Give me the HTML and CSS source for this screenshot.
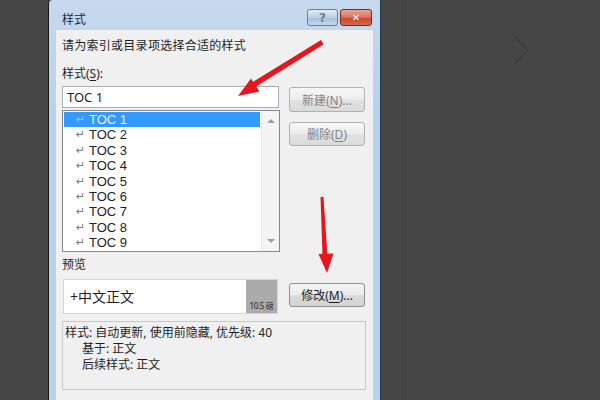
FILE: index.html
```html
<!DOCTYPE html>
<html lang="zh-CN">
<head>
    <meta charset="UTF-8">
    <title>样式</title>
    <link rel="stylesheet" href="styles.css">
</head>
<body>
    <div class="stage">
        <div class="window">
            <div class="titlebar">
                <span class="title">样式</span>
                <div class="caption-btns">
                    <span class="cap-btn help">?</span>
                    <span class="cap-btn close">✕</span>
                </div>
            </div>
            <div class="client">
                <div class="hint">请为索引或目录项选择合适的样式</div>
                <div class="label">样式(<u>S</u>):</div>
                <div class="main">
                    <div class="left-col">
                        <div class="input">TOC 1</div>
                        <div class="list">
                            <div class="items">
                                <div class="item selected"><span class="ret">↵</span>TOC 1</div>
                                <div class="item"><span class="ret">↵</span>TOC 2</div>
                                <div class="item"><span class="ret">↵</span>TOC 3</div>
                                <div class="item"><span class="ret">↵</span>TOC 4</div>
                                <div class="item"><span class="ret">↵</span>TOC 5</div>
                                <div class="item"><span class="ret">↵</span>TOC 6</div>
                                <div class="item"><span class="ret">↵</span>TOC 7</div>
                                <div class="item"><span class="ret">↵</span>TOC 8</div>
                                <div class="item"><span class="ret">↵</span>TOC 9</div>
                            </div>
                            <div class="scrollbar">
                                <span class="arrow up"></span>
                                <span class="arrow down"></span>
                            </div>
                        </div>
                        <div class="label preview-label">预览</div>
                        <div class="preview">
                            <span class="preview-text">+中文正文</span>
                            <span class="size-box">10.5 磅</span>
                        </div>
                    </div>
                    <div class="right-col">
                        <button class="btn disabled new">新建(<u>N</u>)...</button>
                        <button class="btn disabled delete">删除(<u>D</u>)</button>
                        <button class="btn modify">修改(<u>M</u>)...</button>
                    </div>
                </div>
                <div class="description">
                    <div>样式: 自动更新, 使用前隐藏, 优先级: 40</div>
                    <div class="indent">基于: 正文</div>
                    <div class="indent">后续样式: 正文</div>
                </div>
            </div>
        </div>
        <div class="backdrop-line"></div>
    </div>

    <!-- background chevron and the red annotation arrows -->
    <svg class="overlay" width="600" height="400" viewBox="0 0 600 400">
        <polyline points="514,35 528,50 514,65" fill="none" stroke="#3d3d3d" stroke-width="1.5"/>
        <polygon points="321,40 323.5,44.5 252,89 249.5,84" fill="#e5161c"/>
        <polygon points="238,96 251,78.5 259.5,91.5" fill="#e5161c"/>
        <polygon points="320.5,197 323.5,197 327.5,256 322.5,256" fill="#e5161c"/>
        <polygon points="327,273 318.5,254 333.5,253.5" fill="#e5161c"/>
    </svg>
</body>
</html>
```

FILE: styles.css
```css
body {
    margin: 0;
    background-color: #464646;
    font-family: "Noto Sans", "Noto Sans CJK SC", sans-serif;
    font-size: 12px;
    color: #1e1e1e;
    width: 600px;
    height: 400px;
    overflow: hidden;
}

.stage {
    display: flex;
    padding-left: 48px;
    height: 400px;
}

.window {
    width: 317px;
    height: 400px;
    border-left: 1px solid #151515;
    border-right: 1px solid #1d3a4c;
    border-top-left-radius: 4px;
    background: linear-gradient(to bottom, #c6d9ee, #b8d0ea 120px, #b9d1eb);
    padding: 0 7px;
    overflow: hidden;
}

.backdrop-line {
    width: 1px;
    height: 400px;
    margin-left: 21px;
    background-color: #414141;
}

.titlebar {
    height: 30px;
    display: flex;
    align-items: flex-start;
    justify-content: space-between;
}

.title {
    font-size: 12px;
    margin-top: 10px;
    margin-left: 6px;
    color: #1e2a38;
}

.caption-btns {
    display: flex;
    gap: 2px;
    margin-top: 9px;
    margin-right: 1px;
}

.cap-btn {
    height: 15px;
    border: 1px solid #6b7f95;
    border-radius: 3px;
    display: flex;
    align-items: center;
    justify-content: center;
    font-weight: bold;
    color: #fff;
}

.help {
    width: 29px;
    background: linear-gradient(to bottom, #e3ecf6, #bccfe5 50%, #a7bfdb 51%, #c4d6ea);
    color: #6d7f94;
    font-size: 12px;
    font-family: "DejaVu Sans", sans-serif;
}

.close {
    width: 30px;
    border-color: #7a2a20;
    background: linear-gradient(to bottom, #e9a797, #d8705d 50%, #c6462e 51%, #d66a4f);
    font-size: 10px;
    font-family: "DejaVu Sans", sans-serif;
}

.client {
    background-color: #f0f0f0;
    height: 370px;
    padding: 8px 8px 0 6px;
    box-sizing: border-box;
}

.hint {
    line-height: 16px;
    letter-spacing: 0.27px;
}

.label {
    line-height: 16px;
    margin-top: 12px;
}

u {
    text-decoration-thickness: 1px;
    text-underline-offset: 2px;
}

.main {
    display: flex;
    gap: 9px;
    margin-top: 4px;
}

.left-col {
    width: 218px;
}

.input {
    height: 20px;
    border: 1px solid #abadb3;
    background-color: #fff;
    font-size: 13px;
    line-height: 20px;
    padding-left: 4px;
    width: 211px;
}

.list {
    margin-top: 2px;
    height: 140px;
    border: 1px solid #828790;
    background-color: #fff;
    display: flex;
}

.items {
    flex: 1;
    padding: 1px 1px 0 1px;
}

.item {
    height: 15.4px;
    line-height: 15.4px;
    font-family: "Liberation Sans", sans-serif;
    font-size: 13px;
    color: #1e1e1e;
    padding-left: 25px;
    position: relative;
    overflow: hidden;
}

.item .ret {
    position: absolute;
    left: 12px;
    font-size: 11px;
    color: #7a7a7a;
    font-family: "DejaVu Sans", sans-serif;
}

.item.selected {
    background-color: #3399ff;
    color: #e6f3ff;
}

.item.selected .ret {
    color: #9cc8f5;
}

.scrollbar {
    width: 17px;
    background-color: #f4f4f4;
    border-left: 1px solid #e8e8e8;
    display: flex;
    flex-direction: column;
    justify-content: space-between;
    align-items: center;
    padding: 8px 0 8px;
}

.arrow {
    width: 0;
    height: 0;
    border-left: 4px solid transparent;
    border-right: 4px solid transparent;
}

.arrow.up {
    border-bottom: 4px solid #a0a0a0;
}

.arrow.down {
    border-top: 4px solid #a0a0a0;
}

.preview-label {
    margin-top: 5px;
}

.preview {
    margin-top: 6px;
    height: 33px;
    width: 213px;
    margin-left: 1px;
    border: 1px solid #d5d5d5;
    background-color: #fff;
    display: flex;
    justify-content: space-between;
}

.preview-text {
    font-size: 14px;
    line-height: 33px;
    padding-left: 6px;
}

.size-box {
    width: 31px;
    background-color: #ababab;
    font-size: 8px;
    display: flex;
    align-items: flex-end;
    justify-content: center;
    padding-bottom: 2px;
    box-sizing: border-box;
    color: #222;
    letter-spacing: -0.3px;
}

.right-col {
    width: 76px;
    display: flex;
    flex-direction: column;
}

.btn {
    font-family: "Noto Sans", "Noto Sans CJK SC", sans-serif;
    font-size: 12px;
    height: 25px;
    border: 1px solid #8e8f8f;
    border-radius: 3px;
    background: linear-gradient(to bottom, #f4f4f4, #ebebeb 50%, #dcdcdc 51%, #d2d2d2);
    color: #1e1e1e;
    padding: 0;
}

.btn.disabled {
    color: #838383;
    border-color: #adb2b5;
    background: linear-gradient(to bottom, #f6f6f6, #ececec 50%, #e2e2e2 51%, #dadada);
}

.btn.new {
    margin-top: 1px;
}

.btn.delete {
    margin-top: 10px;
    height: 24px;
}

.btn.modify {
    margin-top: 137px;
    height: 24px;
}

.description {
    margin-top: 7px;
    width: 298px;
    height: 61px;
    border: 1px solid #c8c8c8;
    padding: 3px 2px;
    line-height: 16px;
}

.indent {
    padding-left: 17px;
}

.overlay {
    position: absolute;
    left: 0;
    top: 0;
    pointer-events: none;
}
```
